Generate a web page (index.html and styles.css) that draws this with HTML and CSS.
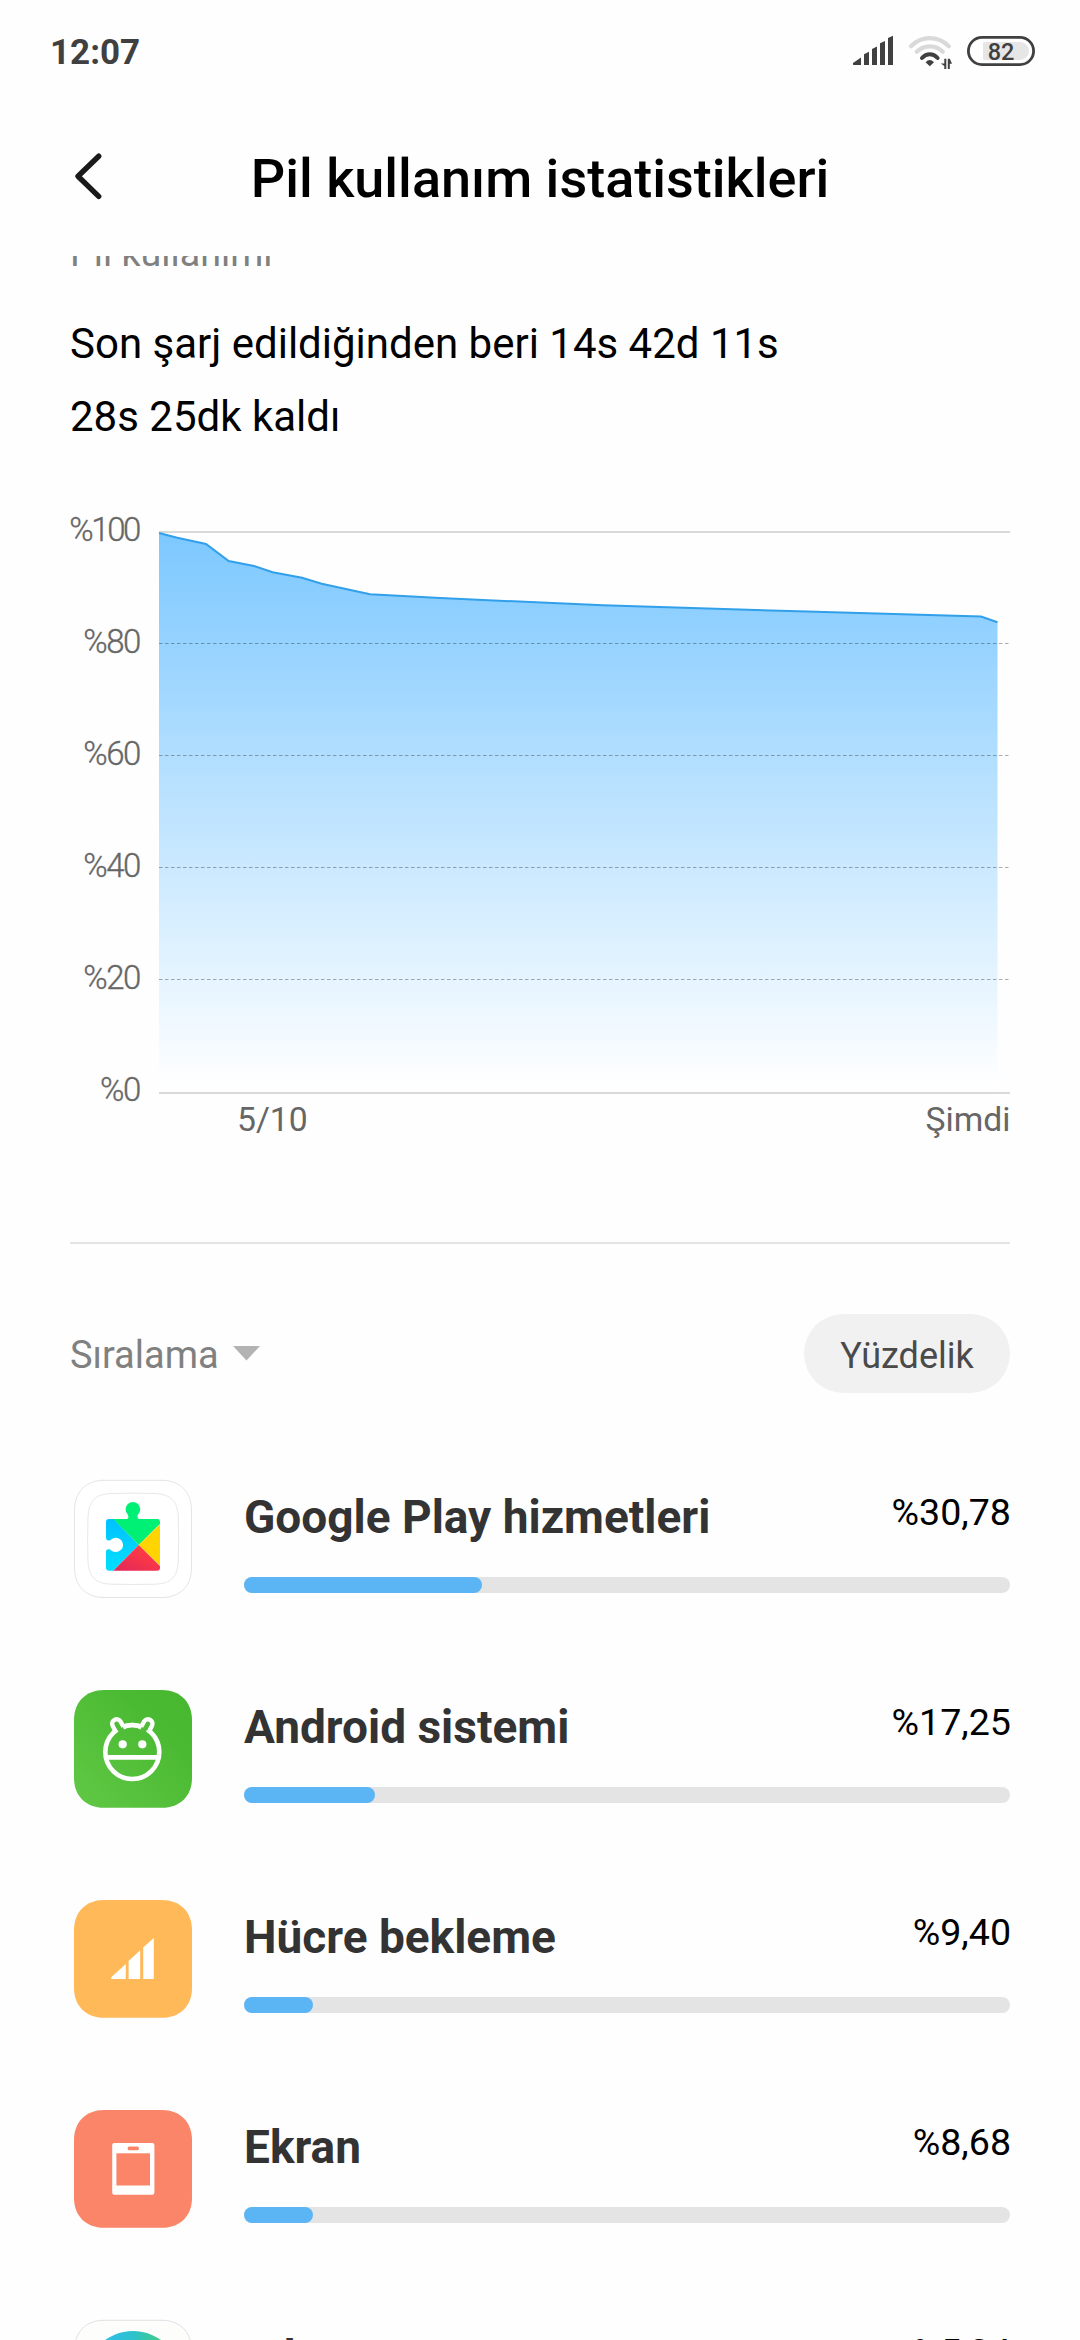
FILE: index.html
```html
<!DOCTYPE html>
<html lang="tr">
<head>
<meta charset="utf-8">
<title>Pil kullanım istatistikleri</title>
<link rel="stylesheet" href="styles.css">
</head>
<body>
<div class="screen">
  <header class="status">
    <span class="clock">12:07</span>
    <svg class="status-icons" width="184" height="104" viewBox="852 0 184 104">
      <g fill="#404040">
        <path d="M853 63L861 57.6V65H853.6Q852.6 65 853 63Z"/>
        <path d="M864 54.3L869 51.8V65H864Z"/>
        <path d="M872 49L877 46.6V65H872Z"/>
        <path d="M880 43.3L885 41V65H880Z"/>
        <path d="M888 38L893 35.8V65H888Z"/>
        <path d="M929.8 66.2L925.6 62.2Q929.8 58 934 62.2Z"/>
        <path d="M944.3 58.7H946.3V69H944.3V66L940.8 63.5H944.3ZM947.8 58.7H949.8L952 63.8H949.8V69H947.8Z"/>
      </g>
      <g fill="none" stroke-width="4.2" stroke-linecap="round">
        <path stroke="#d9d9d9" d="M911 46.2Q919 38.2 929.8 38.2T948.8 46.2"/>
        <path stroke="#d9d9d9" d="M916.8 51.8Q922 46.4 929.8 46.4T942.8 51.8"/>
        <path stroke="#404040" stroke-width="4" d="M922 58Q925.4 54.2 929.8 54.2T937.6 58"/>
      </g>
      <rect x="968.4" y="37.4" width="65.2" height="27.2" rx="13.6" fill="none" stroke="#404040" stroke-width="2.8"/>
      <path fill="#e6e6e6" d="M984.5 42H1020A9 9 0 0 1 1020 60H984.5Q983 60 983 58.5V43.5Q983 42 984.5 42Z"/>
      <text class="battery-level" x="1001" y="60">82</text>
    </svg>
  </header>

  <div class="titlebar">
    <svg class="back" width="110" height="152" viewBox="0 104 110 152">
      <path d="M98.7 156.2L78 176.2L98.7 196.4" fill="none" stroke="#1a1a1a" stroke-width="5.4" stroke-linecap="round" stroke-linejoin="round"/>
    </svg>
    <h1 class="title">Pil kullanım istatistikleri</h1>
  </div>

  <main class="content">
    <div class="caption">Pil kullanımı</div>
    <div class="summary">
      <div>Son şarj edildiğinden beri 14s 42d 11s</div>
      <div>28s 25dk kaldı</div>
    </div>

    <svg class="chart" width="1080" height="727" viewBox="0 453 1080 727">
      <defs>
        <linearGradient id="level" gradientUnits="userSpaceOnUse" x1="0" y1="532" x2="0" y2="1088">
          <stop offset="0" stop-color="#7cc8ff"/>
          <stop offset="1" stop-color="#ffffff"/>
        </linearGradient>
      </defs>
      <rect x="159" y="531" width="851" height="2" fill="#d9d9d9"/>
      <path fill="url(#level)" d="M159 533L177.3 537.7L206 544L228.7 561L254 566L272.7 572.3L302 577.7L321.7 583.7L370 594.3L440 598L603 605.3L807 611.5L981 616.5L997.5 622.3V1092H159Z"/>
      <path fill="none" stroke="#329fea" stroke-width="2" d="M159 533L177.3 537.7L206 544L228.7 561L254 566L272.7 572.3L302 577.7L321.7 583.7L370 594.3L440 598L603 605.3L807 611.5L981 616.5L997.5 622.3"/>
      <g stroke="#000000" stroke-opacity=".32" stroke-width="1" stroke-dasharray="3.5 2.5">
        <path d="M159 643.5H1010"/>
        <path d="M159 755.5H1010"/>
        <path d="M159 867.5H1010"/>
        <path d="M159 979.5H1010"/>
      </g>
      <rect x="159" y="1092" width="851" height="2" fill="#d9d9d9"/>
      <g class="scale" text-anchor="end">
        <text class="full" x="139" y="541">%100</text>
        <text x="140" y="653">%80</text>
        <text x="140" y="765">%60</text>
        <text x="140" y="877">%40</text>
        <text x="140" y="989">%20</text>
        <text x="140" y="1101">%0</text>
      </g>
      <g class="dates">
        <text x="237" y="1131">5/10</text>
        <text x="1010.5" y="1131" text-anchor="end">Şimdi</text>
      </g>
    </svg>

    <div class="divider"></div>

    <div class="toolbar">
      <div class="sort">
        <span>Sıralama</span>
        <svg width="27" height="15" viewBox="0 0 27 15"><path d="M0 0H27L13.5 14.6Z" fill="#b3b3b3"/></svg>
      </div>
      <div class="pill">Yüzdelik</div>
    </div>

    <div class="apps">
      <div class="app">
        <svg class="icon" viewBox="0 0 120 120">
          <defs>
            <linearGradient id="blue" x1="0" y1="0" x2="0" y2="1"><stop offset="0" stop-color="#00bcff"/><stop offset="1" stop-color="#00e4ff"/></linearGradient>
            <linearGradient id="red" x1="1" y1="0" x2="0" y2="1"><stop offset="0.3" stop-color="#ff3a44"/><stop offset="1" stop-color="#e0285a"/></linearGradient>
            <clipPath id="piece"><path d="M36 40H53.5Q55.6 40 55.4 37.5Q55.2 36 54.4 35A7.3 7.3 0 1 1 65.4 35Q64.4 36.2 64.4 37.5Q64.4 40 66.5 40H84Q87 40 87 43V88.7Q87 91.7 84 91.7H36Q33 91.7 33 88.7V73Q33 70 36 70.3Q37.2 70.4 38.2 71.4A7.2 7.2 0 1 0 38.2 60.4Q37.2 61.4 36 61.5Q33 61.7 33 58.6V43Q33 40 36 40Z"/></clipPath>
          </defs>
          <path d="M30 1.3H89C107 1.3 118.5 13 118.5 31V89C118.5 107 107 118.5 89 118.5H31C13 118.5 1.5 107 1.5 89V31C1.5 13 13 1.3 31 1.3Z" fill="#fff" stroke="#e4e4e4"/>
          <path d="M38 14.5Q60 13.8 82 14.5C98 15.5 104.5 22 105.3 38Q106 60 105.3 82C104.5 98 98 104.5 82 105.2Q60 105.8 38 105.2C22 104.5 15.8 98 15 82Q14.3 60 15 38C15.8 22 22 15.5 38 14.5Z" fill="none" stroke="#e8e8e8"/>
          <g clip-path="url(#piece)">
            <path d="M33 32L65.7 66L33 99Z" fill="url(#blue)"/>
            <path d="M40 39.7V20H93V39L65.7 66Z" fill="#00f076"/>
            <path d="M87.5 44.8L65.7 66L87.5 87.2Z" fill="#ffd400"/>
            <path d="M40 92L65.7 66L92 92Z" fill="url(#red)"/>
          </g>
        </svg>
        <div class="info">
          <div class="line"><span class="name">Google Play hizmetleri</span><span class="percent">%30,78</span></div>
          <div class="bar"><div class="fill" style="width:238px"></div></div>
        </div>
      </div>

      <div class="app">
        <svg class="icon" viewBox="0 0 120 120">
          <defs><linearGradient id="green" x1="0" y1="1" x2="1" y2="0"><stop offset="0" stop-color="#61c845"/><stop offset=".7" stop-color="#4bba33"/><stop offset="1" stop-color="#48b730"/></linearGradient></defs>
          <path d="M31 1H89C107 1 119 13 119 31V89C119 107 107 118.8 89 118.8H31C13 118.8 1 107 1 89V31C1 13 13 1 31 1Z" fill="url(#green)"/>
          <g fill="none" stroke="#fff" stroke-width="4.6">
            <circle cx="59.3" cy="63" r="27"/>
            <path d="M33 68.4H86"/>
          </g>
          <path d="M43.5 38L50 34L54 42L47 46Z M75.1 38L68.6 34L64.6 42L71.6 46Z" fill="#4fbd38"/>
          <g fill="#4fbd38" stroke="#fff" stroke-width="4.4">
            <path d="M42.6 42.5L39.6 36.8C37 31.6 44.6 27.8 47.3 32.2L50.4 37.6"/>
            <path d="M76 42.5L79 36.8C81.6 31.6 74 27.8 71.3 32.2L68.2 37.6"/>
          </g>
          <path d="M50 38.4Q59.3 33.6 68.6 38.4" fill="none" stroke="#fff" stroke-width="4.6"/>
          <circle cx="49.7" cy="55.3" r="4.1" fill="#fff"/>
          <circle cx="69.3" cy="55.3" r="4.1" fill="#fff"/>
        </svg>
        <div class="info">
          <div class="line"><span class="name">Android sistemi</span><span class="percent">%17,25</span></div>
          <div class="bar"><div class="fill" style="width:131px"></div></div>
        </div>
      </div>

      <div class="app">
        <svg class="icon" viewBox="0 0 120 120">
          <path d="M31 1H89C107 1 119 13 119 31V89C119 107 107 118.8 89 118.8H31C13 118.8 1 107 1 89V31C1 13 13 1 31 1Z" fill="#ffb959"/>
          <path d="M38.2 78.2L52.8 65V80H39Q37.6 80 38.2 78.2ZM55.6 62L67.2 51.3V80H55.6ZM70.2 48.6L80.8 39V80H70.2Z" fill="#fff"/>
        </svg>
        <div class="info">
          <div class="line"><span class="name">Hücre bekleme</span><span class="percent">%9,40</span></div>
          <div class="bar"><div class="fill" style="width:69px"></div></div>
        </div>
      </div>

      <div class="app">
        <svg class="icon" viewBox="0 0 120 120">
          <path d="M31 1H89C107 1 119 13 119 31V89C119 107 107 118.8 89 118.8H31C13 118.8 1 107 1 89V31C1 13 13 1 31 1Z" fill="#fb8568"/>
          <rect x="39.2" y="34" width="42.2" height="51.8" rx="2.2" fill="#fff"/>
          <rect x="43.4" y="44.3" width="33.6" height="32.2" fill="#fb8568"/>
          <rect x="54.6" y="37.5" width="11.4" height="3.8" rx="1.9" fill="#fb8568"/>
        </svg>
        <div class="info">
          <div class="line"><span class="name">Ekran</span><span class="percent">%8,68</span></div>
          <div class="bar"><div class="fill" style="width:69px"></div></div>
        </div>
      </div>

      <div class="app">
        <svg class="icon" viewBox="0 0 120 120">
          <defs><linearGradient id="edge" x1="0" y1="0" x2="1" y2="0"><stop offset=".25" stop-color="#2fbfe4"/><stop offset=".5" stop-color="#2dc2cc"/><stop offset=".85" stop-color="#45cf7a"/></linearGradient></defs>
          <path d="M31 1.3H89C107 1.3 118.5 13 118.5 31V89C118.5 107 107 118.5 89 118.5H31C13 118.5 1.5 107 1.5 89V31C1.5 13 13 1.3 31 1.3Z" fill="#fdfefc" stroke="#e0e0e4"/>
          <circle cx="60" cy="60" r="48" fill="url(#edge)"/>
        </svg>
        <div class="info">
          <div class="line"><span class="name">Edge</span><span class="percent">%5,34</span></div>
          <div class="bar"><div class="fill" style="width:69px"></div></div>
        </div>
      </div>
    </div>
  </main>
</div>
</body>
</html>
```
FILE: styles.css
```css
* { box-sizing: border-box; }
body {
  margin: 0;
  background: #fefefe;
  font-family: Roboto, "Noto Sans", sans-serif;
  color: #000;
}
svg { display: block; }
.screen {
  width: 1080px;
  height: 2340px;
  overflow: hidden;
  display: flex;
  flex-direction: column;
}
.status {
  flex: none;
  height: 104px;
  padding: 0 44px 0 50px;
  display: flex;
  justify-content: space-between;
}
.clock {
  font-size: 35px;
  font-weight: 700;
  line-height: 105px;
  color: #404040;
}
.battery-level {
  font-size: 23.5px;
  font-weight: 500;
  text-anchor: middle;
  fill: #404040;
}
.titlebar {
  flex: none;
  height: 152px;
  display: grid;
  grid-template-columns: 110px 1fr 110px;
}
.title {
  margin: 0;
  font-size: 54px;
  font-weight: 500;
  line-height: 149px;
  text-align: center;
  white-space: nowrap;
}
.content {
  flex: none;
  height: 2084px;
  overflow: hidden;
  display: flex;
  flex-direction: column;
}
.caption {
  flex: none;
  margin: -28px 70px 0;
  font-size: 37.7px;
  line-height: 50px;
  color: #808080;
}
.summary {
  flex: none;
  margin: 29px 70px 0;
  font-size: 42px;
  line-height: 73px;
}
.chart { flex: none; }
.scale {
  font-size: 33px;
  font-weight: 300;
  letter-spacing: -1.4px;
  fill: #666;
  stroke: #666;
  stroke-width: .35px;
}
.full { letter-spacing: -2.4px; }
.dates {
  font-size: 33.7px;
  fill: #666;
}
.divider {
  flex: none;
  height: 2px;
  margin: 62px 70px 0;
  background: #e4e4e4;
}
.toolbar {
  flex: none;
  height: 79px;
  margin: 70px 70px 0;
  display: flex;
  justify-content: space-between;
}
.sort {
  display: flex;
  align-items: center;
  gap: 14px;
  font-size: 38px;
  color: #808080;
}
.sort span {
  padding-top: 4px;
  line-height: 79px;
}
.pill {
  width: 206px;
  border-radius: 40px;
  background: #f1f1f1;
  font-size: 36px;
  line-height: 85px;
  text-align: center;
  color: #4a4a4a;
}
.apps {
  flex: none;
  margin-top: 86px;
}
.app {
  height: 210px;
  padding: 0 70px 0 73px;
  display: flex;
  gap: 51px;
}
.icon {
  flex: none;
  width: 120px;
  height: 120px;
}
.info { flex: 1; }
.line {
  display: flex;
  justify-content: space-between;
  height: 71px;
  line-height: 66px;
}
.name {
  padding-top: 5px;
  font-size: 46px;
  font-weight: 700;
  color: #333;
}
.percent {
  margin-right: -1px;
  font-size: 37.6px;
}
.bar {
  height: 16px;
  margin-top: 27px;
  border-radius: 8px;
  background: #e4e4e4;
}
.fill {
  height: 16px;
  border-radius: 8px;
  background: #5bb5f4;
}
```
